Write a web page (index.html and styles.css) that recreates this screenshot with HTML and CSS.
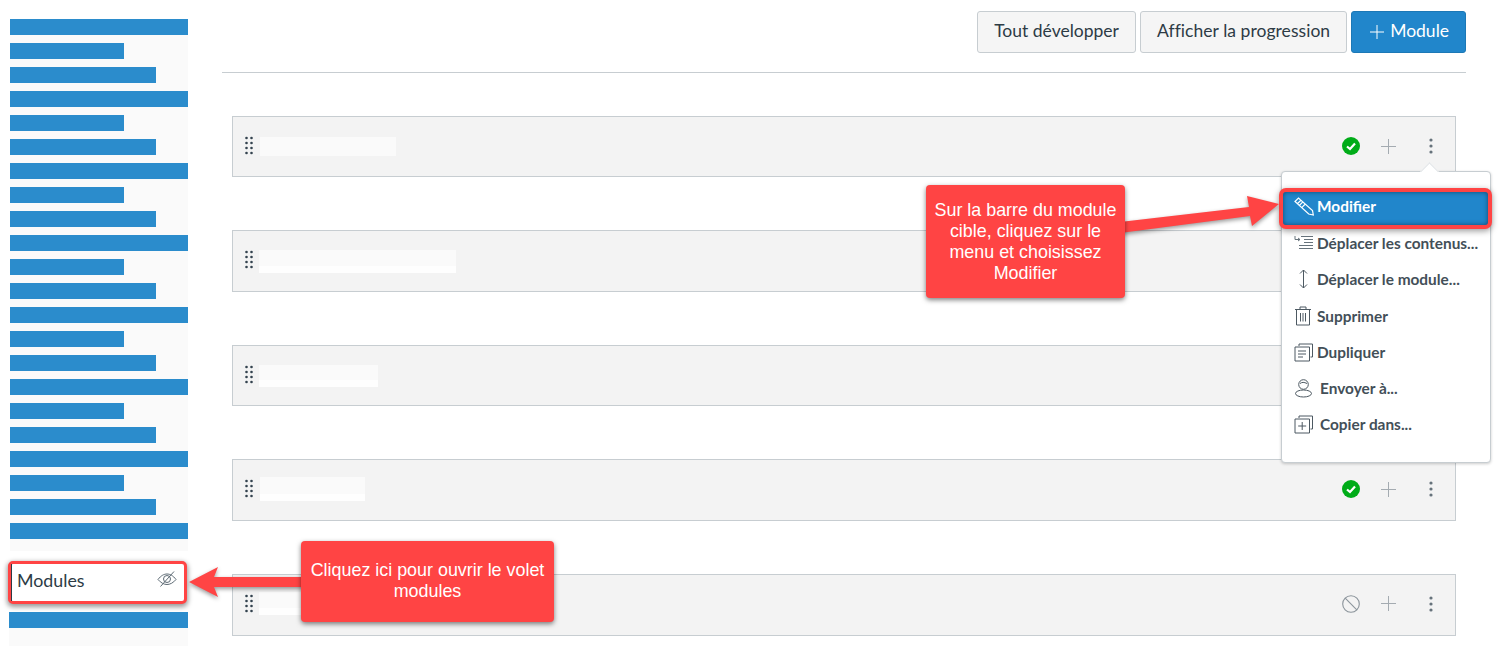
FILE: index.html
```html
<!DOCTYPE html>
<html lang="fr">
<head>
<meta charset="utf-8">
<title>Modules</title>
<link rel="stylesheet" href="styles.css">
</head>
<body>
<div class="page">
  <aside class="sidebar">
    <ul class="nav">
      <li class="bar full"></li><li class="bar short"></li><li class="bar mid"></li>
      <li class="bar full"></li><li class="bar short"></li><li class="bar mid"></li>
      <li class="bar full"></li><li class="bar short"></li><li class="bar mid"></li>
      <li class="bar full"></li><li class="bar short"></li><li class="bar mid"></li>
      <li class="bar full"></li><li class="bar short"></li><li class="bar mid"></li>
      <li class="bar full"></li><li class="bar short"></li><li class="bar mid"></li>
      <li class="bar full"></li><li class="bar short"></li><li class="bar mid"></li>
      <li class="bar full"></li>
    </ul>
    <div class="nav-active">
      <span>Modules</span>
      <svg class="eye" width="20" height="18" viewBox="0 0 20 18" fill="none" stroke="#5d6a74" stroke-width="1"><path d="M1 9.500C4 5.500 7 4 10 4s6 1.500 9 5.500c-3 3.500-6 5-9 5s-6-1.500-9-5z"/><circle cx="10" cy="9" r="3.500"/><path d="M3.500 16.500 17 1.500"/></svg>
    </div>
    <div class="nav-tail"><div class="bar tail-bar"></div></div>
  </aside>

  <main class="main">
    <header class="toolbar">
      <button class="btn">Tout développer</button>
      <button class="btn wide">Afficher la progression</button>
      <button class="btn primary"><svg width="16" height="16" viewBox="0 0 16 16" stroke="#fff" stroke-width="1"><path d="M8 1v14M1 8h14"/></svg>Module</button>
    </header>
    <section class="modules">
      <article class="module">
        <svg class="grip" width="9" height="19" viewBox="0 0 9 19"><g class="dots"><circle cx="1.500" cy="2" r="1.300"/><circle cx="6.500" cy="2" r="1.300"/><circle cx="1.500" cy="7" r="1.300"/><circle cx="6.500" cy="7" r="1.300"/><circle cx="1.500" cy="12" r="1.300"/><circle cx="6.500" cy="12" r="1.300"/><circle cx="1.500" cy="17" r="1.300"/><circle cx="6.500" cy="17" r="1.300"/></g></svg>
        <div class="title t1"></div>
        <div class="actions">
          <svg width="18" height="18" viewBox="0 0 18 18"><circle cx="9" cy="9" r="9" fill="#00ac18"/><path d="M5 9.500 8 12l5-5.500" fill="none" stroke="#fff" stroke-width="2.200"/></svg>
          <svg class="plus" width="15" height="15" viewBox="0 0 15 15" stroke="#a4abb1" stroke-width="1"><path d="M7.500 0v15M0 7.500h15"/></svg>
          <svg class="more" width="4" height="16" viewBox="0 0 4 16" fill="#66727b"><circle cx="2" cy="2" r="1.600"/><circle cx="2" cy="8" r="1.600"/><circle cx="2" cy="14" r="1.600"/></svg>
        </div>
      </article>
      <article class="module">
        <svg class="grip" width="9" height="19" viewBox="0 0 9 19"><g class="dots"><circle cx="1.500" cy="2" r="1.300"/><circle cx="6.500" cy="2" r="1.300"/><circle cx="1.500" cy="7" r="1.300"/><circle cx="6.500" cy="7" r="1.300"/><circle cx="1.500" cy="12" r="1.300"/><circle cx="6.500" cy="12" r="1.300"/><circle cx="1.500" cy="17" r="1.300"/><circle cx="6.500" cy="17" r="1.300"/></g></svg>
        <div class="title t2"></div>
      </article>
      <article class="module">
        <svg class="grip" width="9" height="19" viewBox="0 0 9 19"><g class="dots"><circle cx="1.500" cy="2" r="1.300"/><circle cx="6.500" cy="2" r="1.300"/><circle cx="1.500" cy="7" r="1.300"/><circle cx="6.500" cy="7" r="1.300"/><circle cx="1.500" cy="12" r="1.300"/><circle cx="6.500" cy="12" r="1.300"/><circle cx="1.500" cy="17" r="1.300"/><circle cx="6.500" cy="17" r="1.300"/></g></svg>
        <div class="title t3"></div>
      </article>
      <article class="module">
        <svg class="grip" width="9" height="19" viewBox="0 0 9 19"><g class="dots"><circle cx="1.500" cy="2" r="1.300"/><circle cx="6.500" cy="2" r="1.300"/><circle cx="1.500" cy="7" r="1.300"/><circle cx="6.500" cy="7" r="1.300"/><circle cx="1.500" cy="12" r="1.300"/><circle cx="6.500" cy="12" r="1.300"/><circle cx="1.500" cy="17" r="1.300"/><circle cx="6.500" cy="17" r="1.300"/></g></svg>
        <div class="title t4"></div>
        <div class="actions">
          <svg width="18" height="18" viewBox="0 0 18 18"><circle cx="9" cy="9" r="9" fill="#00ac18"/><path d="M5 9.500 8 12l5-5.500" fill="none" stroke="#fff" stroke-width="2.200"/></svg>
          <svg class="plus" width="15" height="15" viewBox="0 0 15 15" stroke="#a4abb1" stroke-width="1"><path d="M7.500 0v15M0 7.500h15"/></svg>
          <svg class="more" width="4" height="16" viewBox="0 0 4 16" fill="#66727b"><circle cx="2" cy="2" r="1.600"/><circle cx="2" cy="8" r="1.600"/><circle cx="2" cy="14" r="1.600"/></svg>
        </div>
      </article>
      <article class="module">
        <svg class="grip" width="9" height="19" viewBox="0 0 9 19"><g class="dots"><circle cx="1.500" cy="2" r="1.300"/><circle cx="6.500" cy="2" r="1.300"/><circle cx="1.500" cy="7" r="1.300"/><circle cx="6.500" cy="7" r="1.300"/><circle cx="1.500" cy="12" r="1.300"/><circle cx="6.500" cy="12" r="1.300"/><circle cx="1.500" cy="17" r="1.300"/><circle cx="6.500" cy="17" r="1.300"/></g></svg>
        <div class="title t5"></div>
        <div class="actions">
          <svg width="18" height="18" viewBox="0 0 18 18" fill="none" stroke="#8b949b" stroke-width="1.100"><circle cx="9" cy="9" r="8.300"/><path d="M3.200 3.200l11.600 11.600"/></svg>
          <svg class="plus" width="15" height="15" viewBox="0 0 15 15" stroke="#a4abb1" stroke-width="1"><path d="M7.500 0v15M0 7.500h15"/></svg>
          <svg class="more" width="4" height="16" viewBox="0 0 4 16" fill="#66727b"><circle cx="2" cy="2" r="1.600"/><circle cx="2" cy="8" r="1.600"/><circle cx="2" cy="14" r="1.600"/></svg>
        </div>
      </article>
    </section>
  </main>
</div>

<nav class="menu">
  <a class="item active"><svg class="ico" width="20" height="19" viewBox="0 0 20 19" fill="none" stroke="#fff" stroke-width="1.200"><path d="M1 4.500 4.500 1l14 12.500.8 4.500-4.600-1zM3 7l4-3.800M5 8.700l3.900-3.800M7.500 10.800l3.800-3.800"/></svg>Modifier</a>
  <a class="item"><svg class="ico" width="20" height="16" viewBox="0 0 20 16" fill="none" stroke="#66727b" stroke-width="1"><path d="M1 1v3.500h5M4 3 6 4.500 4 6M7 1.500h12M10 4.500h9M10 7.500h9M5 10.500h14M5 13.500h14"/></svg>Déplacer les contenus...</a>
  <a class="item"><svg class="ico" width="20" height="20" viewBox="0 0 20 20" fill="none" stroke="#4d5962" stroke-width="1"><path d="M9.500 1v18M6 4.500 9.500 1 13 4.500M6 15.500 9.500 19 13 15.500"/></svg>Déplacer le module...</a>
  <a class="item"><svg class="ico" width="20" height="20" viewBox="0 0 20 20" fill="none" stroke="#4d5962" stroke-width="1"><path d="M1 3.500h16M6 3V1h6v2M2.500 3.500h13v15.500h-13zM6.500 7v8.500M9 7v8.500M11.500 7v8.500"/></svg>Supprimer</a>
  <a class="item"><svg class="ico" width="20" height="20" viewBox="0 0 20 20" fill="none" stroke="#4d5962" stroke-width="1"><path d="M5 4V2h13.500v13h-2M1 5h14.500v14H1zM4 9h8M4 12h8M4 15h5"/></svg>Dupliquer</a>
  <a class="item spaced"><svg class="ico" width="20" height="20" viewBox="0 0 20 20" fill="none" stroke="#4d5962" stroke-width="1"><circle cx="9.500" cy="6.500" r="4.800"/><path d="M6 5.500c2-1.500 4-1.500 7 0"/><ellipse cx="9.500" cy="15.500" rx="8" ry="3.500"/></svg>Envoyer à...</a>
  <a class="item spaced"><svg class="ico" width="20" height="20" viewBox="0 0 20 20" fill="none" stroke="#4d5962" stroke-width="1"><path d="M5 4V2h13.500v13h-2M1 5h14.500v14H1zM8.200 8v8M4.200 12h8"/></svg>Copier dans...</a>
</nav>

<svg class="arrows" width="1505" height="646" viewBox="0 0 1505 646">
  <path class="arrow" d="M1120 222 1249 207 1247 196 1279 204 1252 226 1250 216 1120 233z"/>
  <path class="arrow" d="M189 582 218 567 214 577H305V587H214L218 597z"/>
</svg>

<div class="callout one">Sur la barre du module cible, cliquez sur le menu et choisissez Modifier</div>
<div class="callout two">Cliquez ici pour ouvrir le volet modules</div>
</body>
</html>
```
FILE: styles.css
```css
* { box-sizing: border-box; }
html, body { margin: 0; padding: 0; height: 646px; overflow: hidden; background: #fff; }
body { font-family: Lato, "Liberation Sans", sans-serif; color: #2d3b45; position: relative; }
.page { display: flex; width: 1505px; height: 646px; }

.sidebar { width: 188px; flex: none; padding-top: 19px; }
.nav { list-style: none; margin: 0 0 0 10px; padding: 0 0 12px; display: flex; flex-direction: column; gap: 8px; background: #fafafa; }
.bar { height: 16px; background: #2b8ccc; }
.full { width: 178px; }
.short { width: 114px; }
.mid { width: 146px; }

.nav-active {
  display: flex; align-items: stretch; justify-content: space-between;
  width: 179px; height: 43px; margin: 10px 0 0 8px; padding: 0 7px 0 0;
  background: #fff; border: 3px solid #ff4444; border-radius: 5px;
  box-shadow: 0 2px 5px 1px rgba(0,0,0,.4);
  font-size: 17.800px; color: #2d3b45;
}
.nav-active span { display: flex; align-items: center; border-left: 1px solid #2d3b45; padding: 0 0 6px 5px; }
.eye { flex: none; align-self: center; margin-top: -7px; }
.nav-tail { margin: 8px 0 0 9px; height: 34px; background: #fafafa; }
.tail-bar { width: 179px; }

.main { width: 1244px; flex: none; margin-left: 34px; }
.toolbar { display: flex; justify-content: flex-end; gap: 4px; padding: 11px 0 19px; border-bottom: 1px solid #c7cdd1; }
.btn {
  height: 42px; padding: 0 16px 3px; font: 17.500px Lato, sans-serif; color: #2d3b45;
  background: #f5f5f5; border: 1px solid #c7cdd1; border-radius: 3px;
}
.wide { letter-spacing: .045px; }
.primary { display: flex; align-items: center; gap: 5px; background: #2186cb; border-color: #1c78b6; color: #fff; padding: 0 16px 3px 17px; }
.primary svg { margin-top: 3px; }

.modules { margin: 43px 10px 0; display: flex; flex-direction: column; gap: 53px; }
.module { display: flex; align-items: flex-start; height: 61.400px; padding: 19px 15px 0 12px; background: #f3f3f3; border: 1px solid #c7cdd1; }
.module:last-child { height: 62px; }
.grip { flex: none; margin-right: 6px; }
.dots { fill: #33424e; }
.title { background: linear-gradient(#fafafa calc(100% - 7px), #fefefe 0); }
.t1 { width: 136px; height: 19px; margin-top: 1px; background: #fafafa; }
.t2 { width: 197px; height: 23px; margin-left: -1px; }
.t3 { width: 119px; height: 22px; margin-left: -1px; }
.t4 { width: 105px; height: 24px; margin-top: -2px; }
.t5 { width: 100px; height: 23px; margin: -2px 0 0 -1px; }
.actions { display: flex; align-items: center; margin: 1px 0 0 auto; height: 18px; }
.plus { margin-left: 21px; }
.more { margin-left: 33px; margin-right: 7px; }

.menu {
  position: absolute; left: 1281px; top: 171px; width: 210px; height: 292px;
  padding-top: 18px; background: #fff; border: 1px solid #c7cdd1; border-radius: 4px;
  box-shadow: 0 1px 3px rgba(0,0,0,.2);
  font-size: 15.400px; font-weight: 700; color: #434f58;
}
.menu::before {
  content: ""; position: absolute; left: 141px; top: -7px; width: 12px; height: 12px;
  background: #fff; transform: rotate(45deg); border-left: 1px solid #e2e5e7; border-top: 1px solid #e2e5e7;
}
.item { display: flex; align-items: center; height: 36.300px; padding: 0 0 3px 12px; position: relative; white-space: nowrap; }
.ico { width: 20px; flex: none; margin-right: 3px; }
.spaced .ico { margin-right: 6px; }
.active {
  height: 33px; margin: 2px 2px 1.300px 1px; padding: 0 0 5px 11px;
  background: #2186cb; color: #fff; border-radius: 3px;
  box-shadow: inset 0 0 5px rgba(0,0,0,.45), 0 0 0 4px #ff4444, 0 2px 6px 4px rgba(0,0,0,.4);
}

.arrows { position: absolute; left: 0; top: 0; pointer-events: none; }
.arrow { fill: #ff4444; filter: drop-shadow(0 2px 2px rgba(0,0,0,.4)); }

.callout {
  position: absolute; display: flex; align-items: center; justify-content: center; text-align: center;
  background: #ff4444; color: #fff; border-radius: 4px;
  font: 17.900px/21px "Liberation Sans", Arial, sans-serif;
  box-shadow: 0 2px 5px rgba(0,0,0,.5);
}
.one { left: 926px; top: 185px; width: 199px; height: 113px; padding: 0 7px; }
.two { left: 301px; top: 541px; width: 253px; height: 81px; padding: 0 7px 2px; }
```
